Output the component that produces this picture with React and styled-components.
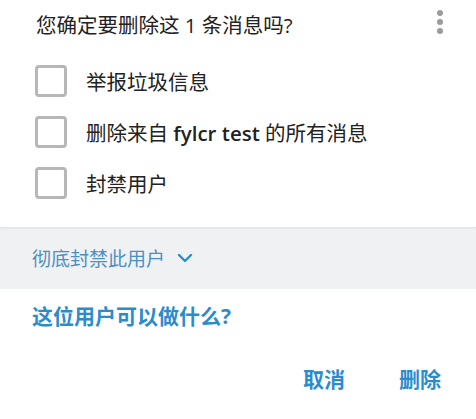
import React from 'react';
import styled, { createGlobalStyle } from 'styled-components';

const Global = createGlobalStyle`
  html, body { margin: 0; padding: 0; background: #fff; }
  body { font-family: "Open Sans", "Noto Sans CJK SC", sans-serif; }
`;

const Dialog = styled.div`
  width: 476px;
  height: 419px;
  background: #fff;
  display: flex;
  flex-direction: column;
`;

const Header = styled.div`
  display: flex;
  align-items: center;
  justify-content: space-between;
  padding: 10px 33px 0 36px;
  height: 28px;
`;

const Title = styled.div`
  font-size: 20.5px;
  color: #222;
`;

const Kebab = styled.div`
  display: flex;
  flex-direction: column;
  gap: 3px;
  margin-top: -4px;
  span {
    width: 6px;
    height: 6px;
    border-radius: 50%;
    background: #9a9a9a;
  }
`;

const Options = styled.div`
  display: flex;
  flex-direction: column;
  gap: 19px;
  padding: 27px 0 28px 35px;
`;

const Row = styled.label`
  display: flex;
  align-items: center;
  gap: 19px;
  font-size: 20.5px;
  color: #222;
  b { font-weight: 600; }
`;

const Box = styled.span`
  width: 26px;
  height: 26px;
  border: 3px solid #b7b7b7;
  border-radius: 4px;
  flex: none;
`;

const Banned = styled.div`
  background: #f0f1f2;
  height: 62px;
  display: flex;
  align-items: center;
  gap: 12px;
  padding-left: 32px;
  box-shadow: inset 0 3px 3px -2px rgba(0, 0, 0, 0.08);
  color: #4a90c4;
  font-size: 19px;
`;

const Link = styled.div`
  padding: 11px 0 0 32px;
  font-size: 21px;
  font-weight: 700;
  color: #2b8ccc;
`;

const Footer = styled.div`
  display: flex;
  justify-content: flex-end;
  gap: 54px;
  padding: 33px 35px 0 0;
`;

const Action = styled.button`
  border: none;
  background: none;
  padding: 0;
  font-family: inherit;
  font-size: 21px;
  font-weight: 700;
  color: #2b8ccc;
`;

export default function App() {
  const items = [
    '举报垃圾信息',
    <>删除来自 <b>fylcr test</b> 的所有消息</>,
    '封禁用户',
  ];
  return (
    <Dialog>
      <Global />
      <Header>
        <Title>您确定要删除这 1 条消息吗?</Title>
        <Kebab><span /><span /><span /></Kebab>
      </Header>
      <Options>
        {items.map((t, i) => (
          <Row key={i}><Box /><span>{t}</span></Row>
        ))}
      </Options>
      <Banned>
        彻底封禁此用户
        <svg width="16" height="10" viewBox="0 0 16 10">
          <path d="M2 2l6 6 6-6" fill="none" stroke="#2b8ccc" strokeWidth="2.4" strokeLinecap="round" strokeLinejoin="round" />
        </svg>
      </Banned>
      <Link>这位用户可以做什么?</Link>
      <Footer>
        <Action>取消</Action>
        <Action>删除</Action>
      </Footer>
    </Dialog>
  );
}
